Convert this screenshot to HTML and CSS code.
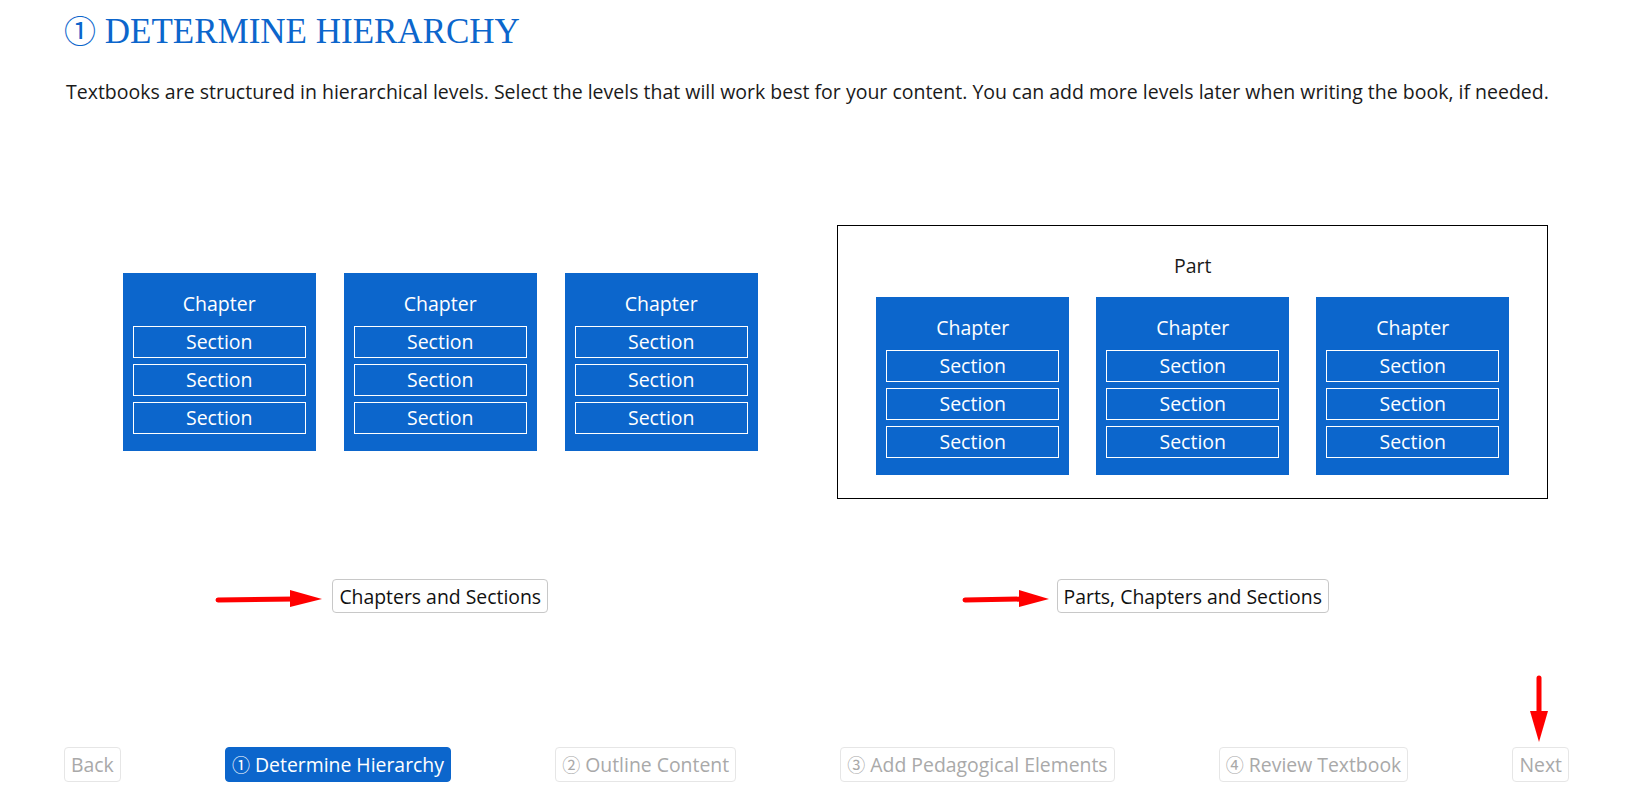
FILE: index.html
```html
<!DOCTYPE html>
<html lang="en">
<head>
    <meta charset="UTF-8">
    <title>Determine Hierarchy</title>
    <link rel="stylesheet" href="styles.css">
</head>
<body>
    <div class="page">
        <h1 class="title"><span class="num">①</span> DETERMINE HIERARCHY</h1>
        <p class="intro">Textbooks are structured in hierarchical levels. Select the levels that will work best for your content. You can add more levels later when writing the book, if needed.</p>

        <div class="options">
            <div class="option">
                <div class="diagram">
                    <div class="chapters">
                        <div class="chapter">
                            <div class="chapter-label">Chapter</div>
                            <div class="section">Section</div>
                            <div class="section">Section</div>
                            <div class="section">Section</div>
                        </div>
                        <div class="chapter">
                            <div class="chapter-label">Chapter</div>
                            <div class="section">Section</div>
                            <div class="section">Section</div>
                            <div class="section">Section</div>
                        </div>
                        <div class="chapter">
                            <div class="chapter-label">Chapter</div>
                            <div class="section">Section</div>
                            <div class="section">Section</div>
                            <div class="section">Section</div>
                        </div>
                    </div>
                </div>
                <div class="choice">
                    <svg class="arrow arrow-left" width="108" height="20" viewBox="0 0 108 20">
                        <path d="M3 11 L80 10" stroke="#ff0000" stroke-width="5" stroke-linecap="round" fill="none"/>
                        <polygon points="75,1 107,10 75,18" fill="#ff0000"/>
                    </svg>
                    <button class="choice-btn">Chapters and Sections</button>
                </div>
            </div>

            <div class="option">
                <div class="diagram">
                    <div class="part">
                        <div class="part-label">Part</div>
                        <div class="chapters">
                            <div class="chapter">
                                <div class="chapter-label">Chapter</div>
                                <div class="section">Section</div>
                                <div class="section">Section</div>
                                <div class="section">Section</div>
                            </div>
                            <div class="chapter">
                                <div class="chapter-label">Chapter</div>
                                <div class="section">Section</div>
                                <div class="section">Section</div>
                                <div class="section">Section</div>
                            </div>
                            <div class="chapter">
                                <div class="chapter-label">Chapter</div>
                                <div class="section">Section</div>
                                <div class="section">Section</div>
                                <div class="section">Section</div>
                            </div>
                        </div>
                    </div>
                </div>
                <div class="choice">
                    <svg class="arrow arrow-right" width="88" height="20" viewBox="0 0 88 20">
                        <path d="M3 11 L62 10" stroke="#ff0000" stroke-width="5" stroke-linecap="round" fill="none"/>
                        <polygon points="57,1 87,10 57,18" fill="#ff0000"/>
                    </svg>
                    <button class="choice-btn">Parts, Chapters and Sections</button>
                </div>
            </div>
        </div>

        <div class="steps">
            <button class="step-btn">Back</button>
            <button class="step-btn active"><span class="step-num">①</span> Determine Hierarchy</button>
            <button class="step-btn"><span class="step-num">②</span> Outline Content</button>
            <button class="step-btn"><span class="step-num">③</span> Add Pedagogical Elements</button>
            <button class="step-btn"><span class="step-num">④</span> Review Textbook</button>
            <div class="next-wrap">
                <svg class="arrow arrow-down" width="20" height="68" viewBox="0 0 20 68">
                    <path d="M10 3 L10 40" stroke="#ff0000" stroke-width="5" stroke-linecap="round" fill="none"/>
                    <polygon points="1,36 19,36 10,67" fill="#ff0000"/>
                </svg>
                <button class="step-btn">Next</button>
            </div>
        </div>
    </div>
</body>
</html>
```

FILE: styles.css
```css
body {
    margin: 0;
    padding: 0;
    background: #fff;
    font-family: "Open Sans", "Noto Sans CJK JP", sans-serif;
    color: #1a1a1a;
}
.page {
    height: 803px;
    box-sizing: border-box;
    padding: 9px 76px 21px 64px;
    display: flex;
    flex-direction: column;
}
.title {
    margin: 0;
    font-family: "Liberation Serif", "Noto Sans CJK JP", serif;
    font-weight: normal;
    font-size: 35px;
    line-height: 40px;
    color: #0c66cc;
}
.title .num {
    font-family: "Noto Sans CJK JP", sans-serif;
    font-size: 32px;
}
.intro {
    margin: 26px 0 0 2px;
    font-size: 19.5px;
    line-height: 28px;
    white-space: nowrap;
}
.options {
    margin-top: 94px;
    display: grid;
    grid-template-columns: 1fr 1fr;
}
.option {
    display: flex;
    flex-direction: column;
    align-items: center;
}
.diagram {
    height: 324px;
    display: flex;
    align-items: center;
    justify-content: center;
}
.chapters {
    display: flex;
    gap: 28px;
}
.part .chapters {
    gap: 27px;
}
.chapter {
    width: 193px;
    box-sizing: border-box;
    padding: 17px 10px;
    background: #0c66cc;
    color: #fff;
    display: flex;
    flex-direction: column;
    gap: 6px;
}
.chapter-label {
    text-align: center;
    font-size: 19.5px;
    line-height: 28px;
    margin-bottom: 2px;
}
.section {
    height: 32px;
    box-sizing: border-box;
    border: 1px solid #fff;
    text-align: center;
    font-size: 19.5px;
    line-height: 30px;
}
.part {
    border: 1px solid #000;
    padding: 26px 38px 23px;
}
.part-label {
    text-align: center;
    font-size: 19.5px;
    line-height: 28px;
    margin-bottom: 17px;
}
.choice {
    position: relative;
    margin-top: 55px;
}
.choice-btn {
    height: 34px;
    padding: 0 6px;
    background: #fff;
    border: 1px solid #c8c8c8;
    border-radius: 4px;
    font-family: inherit;
    font-size: 19.4px;
    color: #111;
    cursor: pointer;
}
.arrow {
    position: absolute;
}
.arrow-left {
    right: 100%;
    margin-right: 9px;
    top: 10px;
}
.arrow-right {
    right: 100%;
    margin-right: 7px;
    top: 10px;
}
.steps {
    margin-top: auto;
    display: flex;
    justify-content: space-between;
    align-items: center;
}
.step-btn {
    height: 35px;
    padding: 0 6px;
    background: #fff;
    border: 1px solid #e6e6e6;
    border-radius: 4px;
    font-family: inherit;
    font-size: 19.4px;
    color: #a9a9a9;
}
.step-btn.active {
    background: #0c66cc;
    border-color: #0c66cc;
    color: #fff;
}
.step-num {
    font-family: "Noto Sans CJK JP", sans-serif;
    font-size: 18px;
}
.next-wrap {
    position: relative;
}
.arrow-down {
    bottom: 100%;
    margin-bottom: 4px;
    left: 50%;
    margin-left: -12px;
}
```
